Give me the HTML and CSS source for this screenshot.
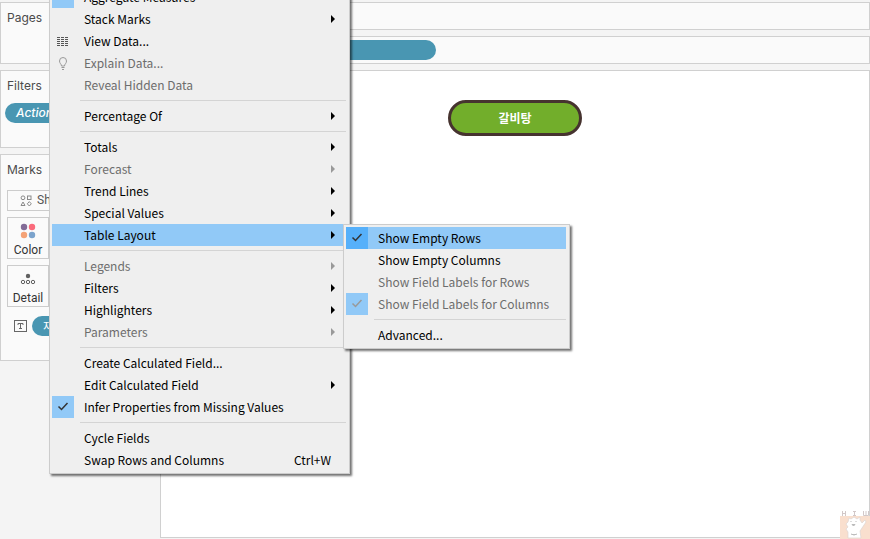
FILE: index.html
```html
<!DOCTYPE html>
<html lang="en">
<head>
<meta charset="utf-8">
<title>Worksheet</title>
<link rel="stylesheet" href="styles.css">
</head>
<body>
<div class="workspace">
  <aside class="sidebar">
    <section class="card pages"><h2>Pages</h2></section>
    <section class="card filters">
      <h2>Filters</h2>
      <button class="pill filter-pill" type="button">Action</button>
    </section>
    <section class="card marks">
      <h2>Marks</h2>
      <div class="mark-type">
        <svg width="12" height="12" viewBox="0 0 12 12" fill="none" stroke="#8a8a8a"><circle cx="3" cy="2.800" r="1.900"/><rect x="7.500" y="1" width="3.500" height="3.500"/><path d="M3 7 5 10.500H1Z"/><path d="M9.300 6.600 11.300 8.800 9.300 11 7.300 8.800Z"/></svg>
        <select aria-label="Mark type"><option>Shape</option></select>
      </div>
      <div class="mark-buttons">
        <button type="button">
          <svg width="16" height="16" viewBox="0 0 16 16"><circle cx="4" cy="4" r="3.200" fill="#836c97"/><circle cx="12" cy="4" r="3.200" fill="#fa6a7b"/><circle cx="4" cy="12" r="3.200" fill="#f4a276"/><circle cx="12" cy="12" r="3.200" fill="#7ba3cc"/></svg>
          <span>Color</span>
        </button>
        <button type="button">
          <svg width="16" height="16" viewBox="0 0 16 16" fill="none" stroke="#606060"><circle cx="8" cy="5" r="2.200" fill="#606060" stroke="none"/><circle cx="3" cy="11" r="1.700"/><circle cx="8" cy="11" r="1.700"/><circle cx="13" cy="11" r="1.700"/></svg>
          <span>Detail</span>
        </button>
      </div>
      <div class="mark-field">
        <svg width="13" height="12" viewBox="0 0 13 12" fill="none" stroke="#666"><rect x=".5" y=".5" width="12" height="11"/><path d="M4 5V3.500H9V5M6.500 3.500V8.500M5 8.500H8"/></svg>
        <button class="pill field-pill" type="button">재</button>
      </div>
    </section>
  </aside>
  <main class="content">
    <div class="shelf"></div>
    <div class="shelf"><button class="pill row-pill" type="button" aria-label="Row field"></button></div>
    <div class="canvas">
      <button class="food" type="button">갈비탕</button>
      <svg class="watermark" width="30" height="29" viewBox="0 0 30 29"><path d="M0 6H30V29H0Z" fill="#f9dfce"/><g fill="none" stroke="#d2c8c8"><path d="M2.500 1V6M5.500 1V6M2.500 3.500H5.500M13 1.500H16M14.500 1.500V5.500M13 5.500H16M23.500 1V5.500H28.500V1M26 1V5.500"/></g><path d="M9 8 11 9 14 7 17 9 20 7 20 10 22 13 25 10 26 12 22 18 20 21 21 28H8L8 22 6 19 8 17 6 14 8 12Z" fill="#fff" stroke="#ddd6d2" stroke-width=".7"/><path d="M10.500 11.500h1M15.500 11.500h1M12 14.500h3l-1.500 1.500zM11 24l3 1 3-1" fill="#bbb" stroke="#bbb"/></svg>
    </div>
  </main>
</div>

<svg width="0" height="0" class="defs"><defs>
  <symbol id="check" viewBox="0 0 22 22"><path d="M6.500 10.500 9.500 13.500 15.500 7" fill="none" stroke="currentColor" stroke-width="1.500"/></symbol>
  <symbol id="arrow" viewBox="0 0 4 8"><path d="M0 0 4 4 0 8Z" fill="currentColor"/></symbol>
</defs></svg>

<div class="menu main-menu" role="menu">
  <button role="menuitem"><i class="mark on"></i><span>Aggregate Measures</span></button>
  <button role="menuitem"><i class="mark"></i><span>Stack Marks</span><svg class="arrow"><use href="#arrow"/></svg></button>
  <button role="menuitem"><i class="mark"><svg width="12" height="9" viewBox="0 0 12 9" stroke="#555" stroke-dasharray="3 1"><path d="M0 .5H12M0 2.500H12M0 4.500H12M0 6.500H12M0 8.500H12" shape-rendering="crispEdges"/></svg></i><span>View Data...</span></button>
  <button role="menuitem" disabled><i class="mark"><svg width="10" height="13" viewBox="0 0 10 13" fill="none" stroke="#999"><path d="M3.500 9C3.500 7 1.500 6.500 1.500 4A3.500 3.500 0 0 1 8.500 4C8.500 6.500 6.500 7 6.500 9ZM3.500 10.500H6.500M4 12.500H6"/></svg></i><span>Explain Data...</span></button>
  <button role="menuitem" disabled><i class="mark"></i><span>Reveal Hidden Data</span></button>
  <hr>
  <button role="menuitem"><i class="mark"></i><span>Percentage Of</span><svg class="arrow"><use href="#arrow"/></svg></button>
  <hr>
  <button role="menuitem"><i class="mark"></i><span>Totals</span><svg class="arrow"><use href="#arrow"/></svg></button>
  <button role="menuitem" disabled><i class="mark"></i><span>Forecast</span><svg class="arrow"><use href="#arrow"/></svg></button>
  <button role="menuitem"><i class="mark"></i><span>Trend Lines</span><svg class="arrow"><use href="#arrow"/></svg></button>
  <button role="menuitem"><i class="mark"></i><span>Special Values</span><svg class="arrow"><use href="#arrow"/></svg></button>
  <div class="parent">
    <button role="menuitem" class="active"><i class="mark"></i><span>Table Layout</span><svg class="arrow"><use href="#arrow"/></svg></button>
    <div class="menu submenu" role="menu">
      <button role="menuitem" class="active"><i class="mark on"><svg width="22" height="22"><use href="#check"/></svg></i><span>Show Empty Rows</span></button>
      <button role="menuitem"><i class="mark"></i><span>Show Empty Columns</span></button>
      <button role="menuitem" disabled><i class="mark"></i><span>Show Field Labels for Rows</span></button>
      <button role="menuitem" disabled><i class="mark on"><svg width="22" height="22"><use href="#check"/></svg></i><span>Show Field Labels for Columns</span></button>
      <hr>
      <button role="menuitem"><i class="mark"></i><span>Advanced...</span></button>
    </div>
  </div>
  <hr>
  <button role="menuitem" disabled><i class="mark"></i><span>Legends</span><svg class="arrow"><use href="#arrow"/></svg></button>
  <button role="menuitem"><i class="mark"></i><span>Filters</span><svg class="arrow"><use href="#arrow"/></svg></button>
  <button role="menuitem"><i class="mark"></i><span>Highlighters</span><svg class="arrow"><use href="#arrow"/></svg></button>
  <button role="menuitem" disabled><i class="mark"></i><span>Parameters</span><svg class="arrow"><use href="#arrow"/></svg></button>
  <hr>
  <button role="menuitem"><i class="mark"></i><span>Create Calculated Field...</span></button>
  <button role="menuitem"><i class="mark"></i><span>Edit Calculated Field</span><svg class="arrow"><use href="#arrow"/></svg></button>
  <button role="menuitem"><i class="mark on"><svg width="22" height="22"><use href="#check"/></svg></i><span>Infer Properties from Missing Values</span></button>
  <hr>
  <button role="menuitem"><i class="mark"></i><span>Cycle Fields</span></button>
  <button role="menuitem"><i class="mark"></i><span>Swap Rows and Columns</span><kbd>Ctrl+W</kbd></button>
</div>
</body>
</html>
```
FILE: styles.css
```css
* { box-sizing: border-box; }
body {
  margin: 0;
  min-height: 100vh;
  overflow: hidden;
  background: #f4f4f4;
  font: 12px/22px "Noto Sans CJK KR", sans-serif;
  color: #000;
}
button, select { font: inherit; color: inherit; border: 0; padding: 0; margin: 0; background: none; }
svg { display: block; flex: none; }
.defs { position: absolute; }

.workspace {
  display: grid;
  grid-template-columns: 154px 1fr;
  gap: 6px;
  height: 100vh;
  padding: 2px 0 1px;
}
.sidebar, .content { display: flex; flex-direction: column; gap: 6px; }
.card, .shelf, .canvas { border: 1px solid #d0d0d0; background: #fafafa; }
.card { padding: 4px 6px; overflow: hidden; }
.card h2 { margin: 0; font: 12px/22px Inter, sans-serif; color: #4b4b4b; }
.pages { height: 62px; }
.filters { height: 78px; padding-left: 4px; }
.filters h2 { padding-left: 2px; }
.marks { height: 207px; }

.pill { display: block; height: 20px; border-radius: 10px; background: #4996b2; color: #fff; text-align: left; line-height: 20px; }
.filter-pill { width: 140px; margin-top: 6px; padding-left: 11px; font: italic 500 12px/20px Inter, sans-serif; }
.mark-type {
  display: flex;
  align-items: center;
  gap: 5px;
  height: 21px;
  margin-top: 9px;
  padding-left: 12px;
  border: 1px solid #ccc;
  font: 12px/19px Roboto, sans-serif;
  color: #555;
}
.mark-type select { appearance: none; flex: 1; }
.mark-buttons { display: grid; gap: 6px; margin-top: 6px; }
.mark-buttons button {
  display: flex;
  flex-direction: column;
  align-items: center;
  gap: 2px;
  width: 42px;
  height: 42px;
  padding-top: 5px;
  border: 1px solid #ccc;
  font: 12px/18px Roboto, sans-serif;
  color: #333;
}
.mark-field { display: flex; align-items: center; gap: 5px; margin-top: 9px; padding-left: 7px; }
.field-pill { width: 110px; padding-left: 11px; }

.shelf { height: 28px; padding: 3px 0 0 90px; }
.row-pill { width: 185px; }
.canvas { position: relative; flex: 1; padding: 29px 0 0 287px; background: #fff; }
.food {
  width: 134px;
  height: 36px;
  border: 3px solid #46332f;
  border-radius: 18px;
  background: #72ae2b;
  color: #fff;
  font-weight: 700;
}
.watermark { position: absolute; right: -1px; bottom: -2px; }

.menu {
  position: absolute;
  padding: 2px;
  border: 1px solid #ccc;
  background: #efefef;
  box-shadow: 2px 2px 2px rgba(0, 0, 0, .55);
}
.menu button { display: flex; align-items: center; width: 100%; height: 22px; text-align: left; line-height: 22px; white-space: nowrap; }
.menu button:disabled { color: #6d6d6d; }
.menu button.active { background: #91c9f7; }
.menu hr { height: 1px; margin: 4px 1px 4px 28px; border: 0; background: #d4d4d4; }
.mark { display: flex; align-items: center; justify-content: center; flex: none; width: 22px; height: 22px; margin-right: 10px; color: #333; }
.mark.on { background: #91c9f7; }
.active .mark.on { background: #56b0fa; }
:disabled .mark.on { color: #999; }
.arrow { width: 4px; height: 8px; margin-left: auto; margin-right: 12px; }
:disabled .arrow { color: #999; }
.menu kbd { margin-left: auto; margin-right: 16px; font: inherit; }
.main-menu { top: -17px; left: 49px; width: 301px; }
.parent { position: relative; }
.submenu { top: 0; left: 291px; width: 227px; padding-right: 3px; }
.submenu hr { margin-right: 0; }
```
